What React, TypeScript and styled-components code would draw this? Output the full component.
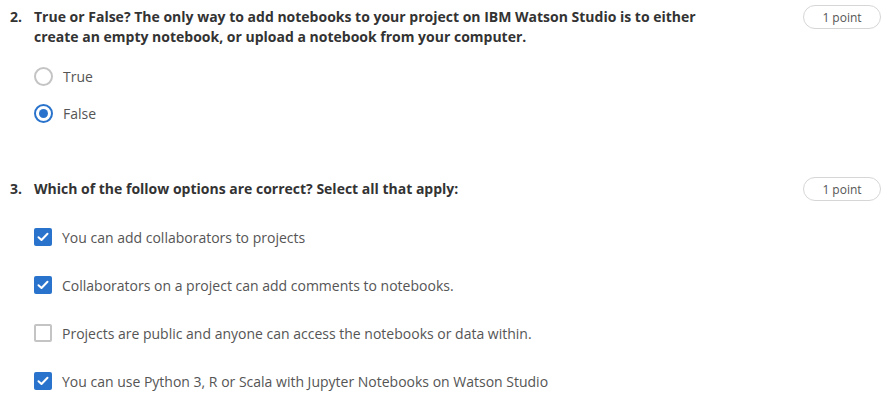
import React from 'react';
import styled, {createGlobalStyle} from 'styled-components';

const GlobalStyle = createGlobalStyle`
  body {
    margin: 0;
    background: #fff;
    font-family: 'Open Sans', 'Noto Sans', sans-serif;
    -webkit-font-smoothing: antialiased;
  }
`;

const Page = styled.div`
  display: flex;
  flex-direction: column;
  gap: 40px;
  padding: 0 6px 0 10px;
`;

const Question = styled.section`
  display: flex;
  align-items: flex-start;
  padding-top: 5px;
`;

const Number = styled.div`
  width: 24px;
  flex: none;
  padding-top: 2px;
  font-size: 14px;
  line-height: 20px;
  font-weight: 700;
  color: #333;
`;

const Body = styled.div`
  flex: 1;
`;

const Title = styled.div`
  padding-top: 2px;
  font-size: 14px;
  line-height: 20px;
  font-weight: 700;
  color: #333;
`;

const Options = styled.div<{$gap: number}>`
  display: flex;
  flex-direction: column;
  margin-top: ${({$gap}) => $gap}px;
`;

const Option = styled.label<{$height: number}>`
  display: flex;
  align-items: center;
  gap: 10px;
  height: ${({$height}) => $height}px;
  font-size: 14px;
  color: #555;
`;

const Radio = styled.span<{$checked: boolean}>`
  box-sizing: border-box;
  width: 19px;
  height: 19px;
  flex: none;
  border-radius: 50%;
  border: 2px solid ${({$checked}) => ($checked ? '#2a73cc' : '#c4c4c4')};
  display: flex;
  align-items: center;
  justify-content: center;

  &::after {
    content: '';
    display: ${({$checked}) => ($checked ? 'block' : 'none')};
    width: 9px;
    height: 9px;
    border-radius: 50%;
    background: #2a73cc;
  }
`;

const Box = styled.span<{$checked: boolean}>`
  box-sizing: border-box;
  width: 18px;
  height: 18px;
  flex: none;
  border-radius: 2px;
  border: ${({$checked}) => ($checked ? 'none' : '2px solid #c4c4c4')};
  background: ${({$checked}) => ($checked ? '#2a73cc' : '#fff')};
  display: flex;
  align-items: center;
  justify-content: center;
`;

const Badge = styled.div`
  flex: none;
  box-sizing: border-box;
  width: 78px;
  height: 24px;
  border: 1px solid #d6d6d6;
  border-radius: 12px;
  display: flex;
  align-items: center;
  justify-content: center;
  font-size: 12px;
  color: #555;
`;

const Check = () => (
  <svg width="12" height="10" viewBox="0 0 12 10" fill="none">
    <path d="M1.5 5.2 L4.5 8 L10.5 1.8" stroke="#fff" strokeWidth="2" strokeLinecap="round" strokeLinejoin="round" />
  </svg>
);

const checks = [
  {text: 'You can add collaborators to projects', checked: true},
  {text: 'Collaborators on a project can add comments to notebooks.', checked: true},
  {text: 'Projects are public and anyone can access the notebooks or data within.', checked: false},
  {text: 'You can use Python 3, R or Scala with Jupyter Notebooks on Watson Studio', checked: true},
];

export default function App() {
  return (
    <>
      <GlobalStyle />
      <Page>
        <Question>
          <Number>2.</Number>
          <Body>
            <Title>
              True or False? The only way to add notebooks to your project on IBM Watson Studio is to either
              <br />
              create an empty notebook, or upload a notebook from your computer.
            </Title>
            <Options $gap={11}>
              <Option $height={37}>
                <Radio $checked={false} />
                True
              </Option>
              <Option $height={37}>
                <Radio $checked />
                False
              </Option>
            </Options>
          </Body>
          <Badge>1 point</Badge>
        </Question>
        <Question>
          <Number>3.</Number>
          <Body>
            <Title>Which of the follow options are correct? Select all that apply:</Title>
            <Options $gap={14}>
              {checks.map((c) => (
                <Option key={c.text} $height={48}>
                  <Box $checked={c.checked}>{c.checked && <Check />}</Box>
                  {c.text}
                </Option>
              ))}
            </Options>
          </Body>
          <Badge>1 point</Badge>
        </Question>
      </Page>
    </>
  );
}
